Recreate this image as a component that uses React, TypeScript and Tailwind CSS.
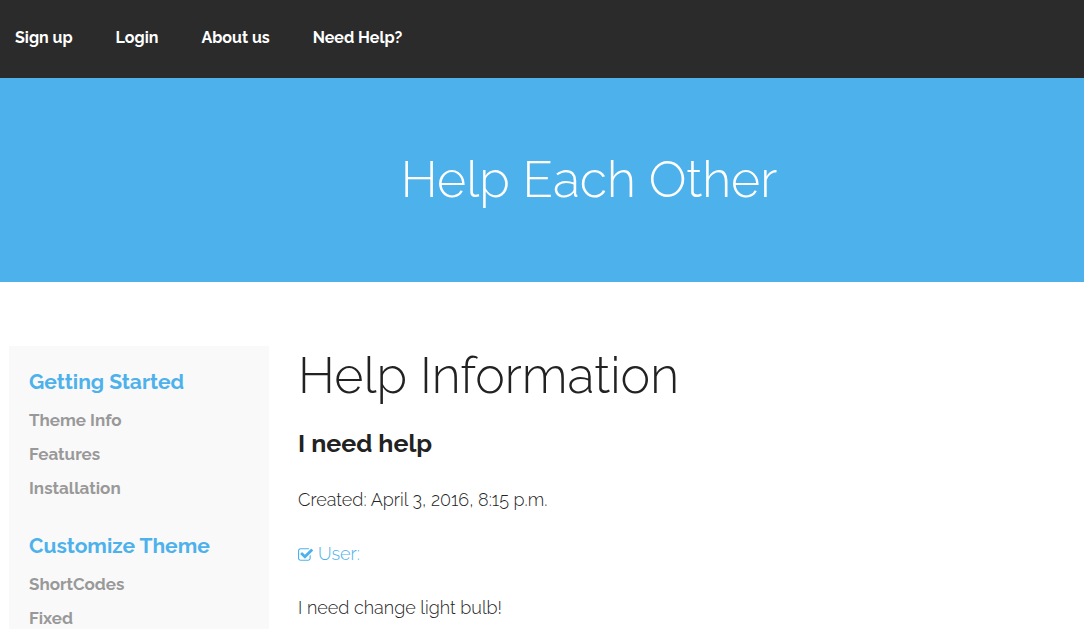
const navItems = ['Sign up', 'Login', 'About us', 'Need Help?'];

const sections = [
  { title: 'Getting Started', links: ['Theme Info', 'Features', 'Installation'] },
  { title: 'Customize Theme', links: ['ShortCodes', 'Fixed'] },
];

function CheckSquareIcon() {
  return (
    <svg viewBox="64 128 1664 1408" className="h-[13px] w-[15px] shrink-0" fill="currentColor" aria-hidden="true">
      <path d="M1472 930v318q0 119-84.5 203.5t-203.5 84.5h-832q-119 0-203.5-84.5t-84.5-203.5v-832q0-119 84.5-203.5t203.5-84.5h832q63 0 117 25 15 7 18 23 3 17-9 29l-49 49q-10 10-23 10-3 0-9-2-23-6-45-6h-832q-66 0-113 47t-47 113v832q0 66 47 113t113 47h832q66 0 113-47t47-113v-254q0-13 9-22l64-64q10-10 23-10 6 0 12 3 20 8 20 29zm231-489l-814 814q-24 24-57 24t-57-24l-430-430q-24-24-24-57t24-57l110-110q24-24 57-24t57 24l263 263 647-647q24-24 57-24t57 24l110 110q24 24 24 57t-24 57z" />
    </svg>
  );
}

export default function App() {
  return (
    <div className="h-screen overflow-hidden bg-white font-['Raleway','Open_Sans',sans-serif] text-lg font-light text-[#222222]">
      <nav className="bg-[#2b2b2b] px-[15px] py-6">
        <ul className="flex gap-[43px]">
          {navItems.map((item) => (
            <li key={item}>
              <a href="#" className="block pb-[2px] text-base leading-7 font-bold text-white">
                {item}
              </a>
            </li>
          ))}
        </ul>
      </nav>

      <header className="bg-[#4db1ec] py-[67px] pl-[94px] text-center">
        <h1 className="text-[50px] leading-[70px] font-light text-white">Help Each Other</h1>
      </header>

      <div className="flex items-start gap-[29px] px-[9px] pt-16">
        <aside className="flex w-[260px] shrink-0 flex-col gap-6 bg-[#f9f9f9] px-5 py-[19px]">
          {sections.map((section) => (
            <section key={section.title}>
              <h2 className="mb-[5px] text-[21px] leading-[33px] font-bold text-[#4db1ec]">{section.title}</h2>
              <ul>
                {section.links.map((link) => (
                  <li key={link}>
                    <a href="#" className="block text-[17px] leading-[34px] font-bold text-[#999999]">
                      {link}
                    </a>
                  </li>
                ))}
              </ul>
            </section>
          ))}
        </aside>

        <main className="min-w-0 flex-1">
          <h1 className="text-[50px] leading-[60px] font-light">Help Information</h1>
          <h2 className="mt-5 text-[25px] leading-[34px] font-bold">I need help</h2>
          <div className="mt-[26px] flex flex-col gap-[26px] leading-7">
            <p>Created: April 3, 2016, 8:15 p.m.</p>
            <a href="#" className="flex items-center gap-[5px] text-[#4db1ec]">
              <CheckSquareIcon />
              User:
            </a>
            <p>I need change light bulb!</p>
          </div>
        </main>
      </div>
    </div>
  );
}
